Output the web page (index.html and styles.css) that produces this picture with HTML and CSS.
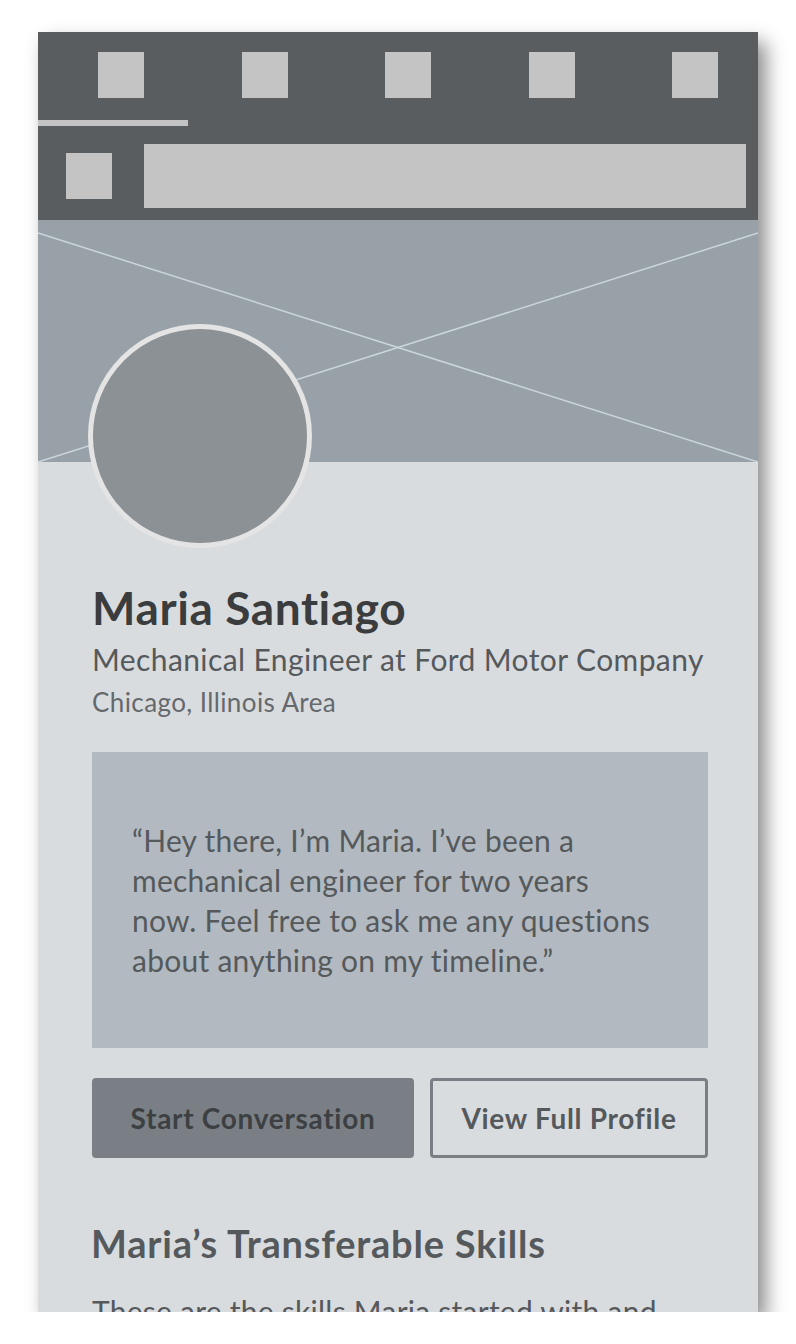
FILE: index.html
```html
<!DOCTYPE html>
<html>
<head>
<meta charset="utf-8">
<link rel="stylesheet" href="styles.css">
</head>
<body>
<div class="phone">
  <header class="topbar">
    <div class="tabs">
      <span class="sq"></span><span class="sq"></span><span class="sq"></span><span class="sq"></span><span class="sq"></span>
    </div>
    <div class="underline"></div>
    <div class="searchrow">
      <span class="sq small"></span>
      <div class="search"></div>
    </div>
  </header>
  <div class="banner">
    <svg class="xlines" viewBox="0 0 720 242" preserveAspectRatio="none">
      <line x1="0" y1="13" x2="720" y2="242" stroke="#cbd6dc" stroke-width="1.5"/>
      <line x1="0" y1="242" x2="720" y2="13" stroke="#cbd6dc" stroke-width="1.5"/>
    </svg>
  </div>
  <main class="content">
    <div class="avatar"></div>
    <h1 class="name">Maria Santiago</h1>
    <p class="role">Mechanical Engineer at Ford Motor Company</p>
    <p class="loc">Chicago, Illinois Area</p>
    <blockquote class="quote">“Hey there, I’m Maria. I’ve been a<br>mechanical engineer for two years<br>now. Feel free to ask me any questions<br>about anything on my timeline.”</blockquote>
    <div class="actions">
      <button class="btn primary">Start Conversation</button>
      <button class="btn outline">View Full Profile</button>
    </div>
    <h2 class="section">Maria’s Transferable Skills</h2>
    <p class="body">These are the skills Maria started with and</p>
  </main>
</div>
</body>
</html>
```
FILE: styles.css
```css
* { box-sizing: border-box; }
body {
  margin: 0;
  background: #ffffff;
  font-family: Lato, "Liberation Sans", sans-serif;
}
.phone {
  margin: 32px 0 0 38px;
  width: 720px;
  height: 1280px;
  overflow: hidden;
  background: #d9dcdf;
  box-shadow: 8px 10px 18px rgba(0,0,0,0.45);
}
.topbar {
  background: #5a5d60;
  padding: 20px 0 12px 0;
}
.tabs {
  display: flex;
  justify-content: space-between;
  padding: 0 40px 0 60px;
}
.sq {
  display: block;
  width: 46px;
  height: 46px;
  background: #c4c4c4;
}
.underline {
  margin-top: 22px;
  width: 150px;
  height: 6px;
  background: #c4c4c4;
}
.searchrow {
  margin-top: 18px;
  display: flex;
  align-items: center;
  padding: 0 12px 0 28px;
  gap: 32px;
}
.search {
  flex: 1;
  height: 64px;
  background: #c4c4c4;
}
.banner {
  height: 242px;
  background: #98a1a8;
}
.xlines {
  display: block;
  width: 100%;
  height: 100%;
}
.content {
  padding: 0 50px 0 54px;
}
.avatar {
  position: relative;
  margin: -138px 0 0 -4px;
  width: 224px;
  height: 224px;
  border-radius: 50%;
  background: #8c9195;
  border: 5px solid #e4e4e4;
}
.name {
  margin: 34px 0 0 0;
  font-size: 46px;
  line-height: 52px;
  letter-spacing: 0.6px;
  font-weight: 700;
  color: #3a3c3e;
}
.role {
  margin: 7px 0 0 0;
  font-size: 30px;
  line-height: 36px;
  letter-spacing: 0.4px;
  color: #55595c;
}
.loc {
  margin: 9px 0 0 0;
  font-size: 26px;
  line-height: 32px;
  letter-spacing: 0.4px;
  color: #65696c;
}
.quote {
  margin: 34px 0 0 0;
  background: #b2b9c0;
  height: 296px;
  padding: 68px 20px 0 40px;
  font-size: 30px;
  line-height: 40px;
  letter-spacing: 0.25px;
  color: #55595c;
}
.actions {
  margin-top: 30px;
  display: flex;
  gap: 16px;
}
.btn {
  height: 80px;
  font-family: inherit;
  font-size: 28px;
  letter-spacing: 0.7px;
  font-weight: 700;
  border-radius: 4px;
  padding: 0;
}
.primary {
  width: 322px;
  background: #7a7f85;
  border: none;
  color: #3d4043;
}
.outline {
  flex: 1;
  background: transparent;
  border: 3px solid #7a7f85;
  color: #55595c;
}
.section {
  margin: 62px 0 0 -1px;
  font-size: 38px;
  line-height: 46px;
  letter-spacing: 0.8px;
  font-weight: 700;
  color: #55595c;
}
.body {
  margin: 27px 0 0 0;
  font-size: 30px;
  line-height: 36px;
  letter-spacing: 0.25px;
  color: #55595c;
}
```
